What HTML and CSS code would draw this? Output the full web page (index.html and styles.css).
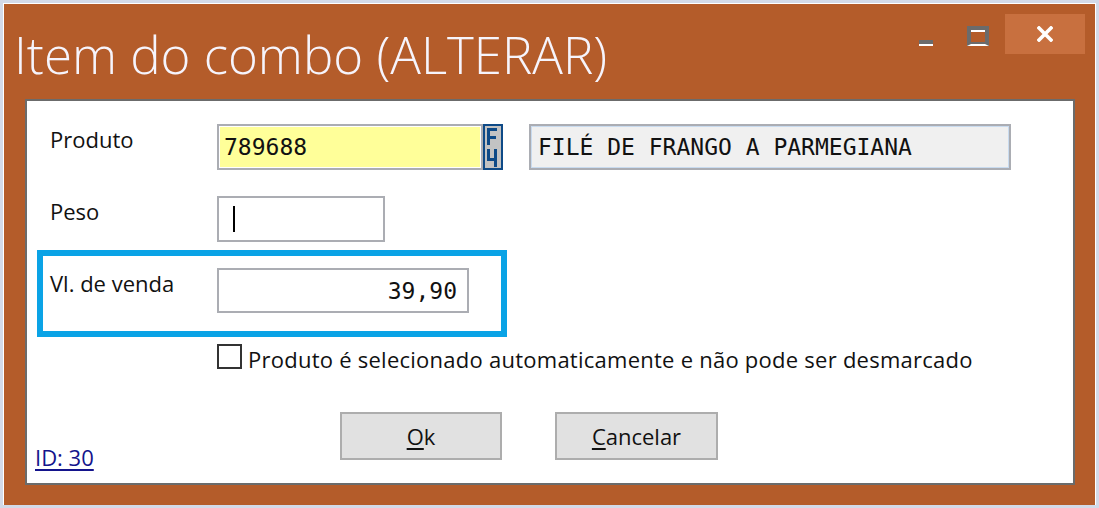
FILE: index.html
```html
<!DOCTYPE html>
<html lang="pt">
<head>
	<meta charset="UTF-8">
	<title>Item do combo</title>
	<link rel="stylesheet" href="styles.css">
</head>
<body>
	<div class="window">
		<div class="titlebar">
			<div class="title">Item do combo (ALTERAR)</div>
			<div class="controls">
				<span class="ctl min"></span>
				<span class="ctl max"></span>
				<span class="ctl close">
					<svg width="16" height="16" viewBox="0 0 16 16">
						<path d="M2 2L14 14M14 2L2 14" stroke="#fff" stroke-width="3.6" stroke-linecap="square"/>
					</svg>
				</span>
			</div>
		</div>
		<div class="client">
			<div class="row">
				<span class="lbl">Produto</span>
				<div class="field code">789688</div>
				<span class="f4">
					<svg width="16" height="42" viewBox="0 0 16 42">
						<!-- F -->
						<rect x="2" y="2" width="3" height="17" fill="#0e4a87"/>
						<rect x="2" y="2" width="10" height="3" fill="#0e4a87"/>
						<rect x="2" y="10" width="9" height="3" fill="#0e4a87"/>
						<!-- 4 -->
						<rect x="2" y="23" width="3" height="12" fill="#0e4a87"/>
						<rect x="2" y="32" width="10" height="3" fill="#0e4a87"/>
						<rect x="9" y="23" width="3" height="18" fill="#0e4a87"/>
					</svg>
				</span>
				<div class="field desc">FILÉ DE FRANGO A PARMEGIANA</div>
			</div>
			<div class="row">
				<span class="lbl">Peso</span>
				<div class="field peso"><span class="caret"></span></div>
			</div>
			<div class="focus">
				<div class="row">
					<span class="lbl">Vl. de venda</span>
					<div class="field valor">39,90</div>
				</div>
			</div>
			<label class="check"><span class="box"></span>Produto é selecionado automaticamente e não pode ser desmarcado</label>
			<div class="footer">
				<a class="id" href="#">ID: 30</a>
				<button class="btn ok"><u>O</u>k</button>
				<button class="btn cancel"><u>C</u>ancelar</button>
			</div>
		</div>
	</div>
</body>
</html>
```
FILE: styles.css
```css
*{
	margin: 0;
	padding: 0;
	box-sizing: border-box;
}
body{
	background-color: #d3dae8;
	font-family: "Open Sans", "Noto Sans", sans-serif;
	font-size: 22px;
	color: #111;
}
.window{
	width: 1099px;
	height: 508px;
	display: flex;
	flex-direction: column;
	background-color: #b45c2a;
	border: 3px solid #d3dae8;
	box-shadow: inset 1px 1px 0 #fff, inset -1px 0 0 #fff;
}
.titlebar{
	height: 96px;
	display: flex;
	align-items: flex-start;
}
.title{
	flex: 1;
	margin-top: 26px;
	padding-left: 11px;
	font-size: 51px;
	font-weight: 300;
	line-height: 51px;
	color: #f6f4fc;
}
.controls{
	display: flex;
	align-items: flex-start;
	margin-top: 11px;
	margin-right: 11px;
}
.ctl{
	display: block;
}
.min{
	width: 14px;
	height: 6px;
	margin-top: 26px;
	border-top: 4px solid #6b6b6b;
	border-bottom: 2px solid #fff;
}
.max{
	width: 22px;
	height: 20px;
	margin-top: 12px;
	margin-left: 34px;
	border: 4px solid #6b6b6b;
	border-bottom: 2px solid #fff;
	box-shadow: inset 0 2px 0 #fff, inset 0 -2px 0 #6b6b6b;
}
.close{
	width: 80px;
	height: 40px;
	margin-left: 16px;
	background-color: #c8703f;
	display: flex;
	align-items: center;
	justify-content: center;
}
.client{
	flex: 1;
	margin: 0 21px 20px 22px;
	padding: 23px 0 0 8px;
	background-color: #fff;
	border: 2px solid #6b6b6b;
	display: flex;
	flex-direction: column;
	align-items: flex-start;
}
.row{
	display: flex;
	align-items: flex-start;
	padding-left: 15px;
}
.row + .row{
	margin-top: 26px;
}
.lbl{
	width: 167px;
	line-height: 30px;
}
.field{
	height: 46px;
	border: 2px solid #abadb3;
	display: flex;
	align-items: center;
	font-family: "DejaVu Sans Mono", "Liberation Mono", monospace;
	font-size: 23px;
	color: #111;
}
.code{
	width: 266px;
	padding-left: 5px;
	background-color: #ffff99;
	box-shadow: inset 0 0 0 1px #fff;
}
.f4{
	width: 20px;
	height: 46px;
	border: 2px solid #0e4a87;
	background-color: #c3c3c3;
}
.f4 svg{
	display: block;
}
.desc{
	width: 482px;
	margin-left: 26px;
	padding-left: 7px;
	background-color: #f0f0f0;
	box-shadow: inset 0 0 0 1px #c9dbef;
}
.peso{
	width: 168px;
	padding-left: 14px;
}
.caret{
	width: 2px;
	height: 26px;
	background-color: #000;
}
.focus{
	width: 470px;
	height: 87px;
	margin-top: 8px;
	margin-left: 2px;
	padding: 12px 0 0 7px;
	border: 6px solid #0aa3e6;
}
.focus .row{
	padding-left: 0;
}
.valor{
	width: 252px;
	height: 45px;
	justify-content: flex-end;
	padding-right: 10px;
}
.check{
	display: flex;
	align-items: flex-start;
	height: 25px;
	margin-top: 7px;
	margin-left: 182px;
	line-height: 30px;
	letter-spacing: 0.25px;
	white-space: nowrap;
}
.box{
	width: 25px;
	height: 25px;
	margin-right: 6px;
	border: 2px solid #333;
	background-color: #fff;
}
.footer{
	display: flex;
	align-items: flex-start;
	margin-top: 43px;
}
.id{
	width: 305px;
	margin-top: 30px;
	line-height: 30px;
	color: #14148c;
	text-decoration-thickness: 2px;
	text-underline-offset: 3px;
}
.btn{
	height: 48px;
	border: 2px solid #adadad;
	background-color: #e1e1e1;
	font-family: inherit;
	font-size: 22px;
	color: #111;
}
.btn u{
	text-decoration-thickness: 2px;
	text-underline-offset: 3px;
}
.ok{
	width: 162px;
}
.cancel{
	width: 163px;
	margin-left: 53px;
}
```
